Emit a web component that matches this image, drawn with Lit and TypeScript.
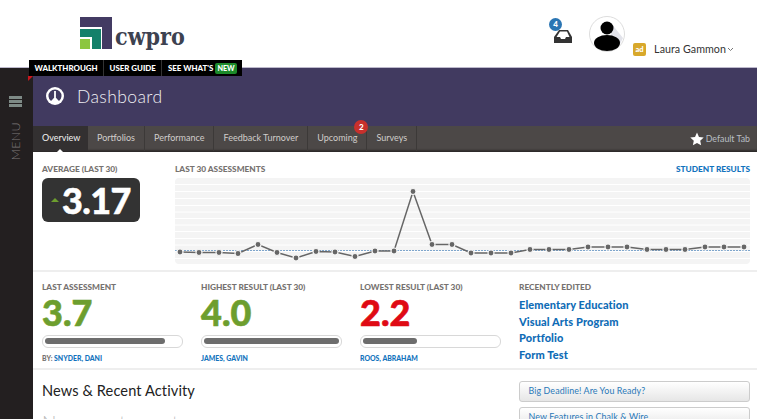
import { LitElement, html, css, svg } from "lit";
import { customElement } from "lit/decorators.js";

const PTS: [number, number][] = [
  [5, 74], [24, 74.5], [44, 74.5], [63, 75.5], [83, 66.5], [102, 74.5], [121, 80], [141, 73.5], [160, 74], [180, 78.5],
  [200, 73], [219, 73], [238, 13.5], [257, 66.5], [277, 66.5], [296, 75], [316, 75], [336, 75], [355, 71.5], [374, 71.5],
  [394, 71.5], [413, 69], [433, 69], [452, 69], [472, 71.5], [491, 71.5], [510, 71.5], [530, 69], [549, 69], [569, 69],
];
const GRID = [6.5, 13.5, 20.5, 27.5, 34, 40.5, 47, 53.5, 60.5, 67, 73.5, 80.5];

const TABS = ["Portfolios", "Performance", "Feedback Turnover", "Upcoming", "Surveys"];
const STATS = [
  { label: "LAST ASSESSMENT", value: "3.7", tone: "good", fill: 89, by: "BY: ", name: "SNYDER, DANI" },
  { label: "HIGHEST RESULT (LAST 30)", value: "4.0", tone: "good", fill: 100, by: "", name: "JAMES, GAVIN" },
  { label: "LOWEST RESULT (LAST 30)", value: "2.2", tone: "bad", fill: 40, by: "", name: "ROOS, ABRAHAM" },
];
const RECENT = ["Elementary Education", "Visual Arts Program", "Portfolio", "Form Test"];

@customElement("app-root")
export class AppRoot extends LitElement {
  static styles = css`
    :host { display: block; width: 757px; height: 419px; overflow: hidden; position: relative; background: #fff;
      font-family: Lato, "Open Sans", sans-serif; color: #222; }
    .top { height: 68px; display: flex; box-sizing: border-box; border-bottom: 1px solid #bdb9cc; background: #fff; }
    .logo { margin: 17px 0 0 80px; display: flex; align-items: flex-end; height: 32px; gap: 3px; }
    .logo-text { font-family: "DejaVu Serif", serif; font-weight: 700; font-size: 25px; line-height: 25px; color: #3d4250; transform: scaleX(0.83); transform-origin: left; }
    .right { margin-left: auto; display: flex; align-items: flex-start; padding-right: 23px; }
    .inbox { position: relative; margin: 27px 17px 0 0; width: 18px; height: 13px; }
    .count { position: absolute; left: -5px; top: -9px; width: 13px; height: 13px; border-radius: 50%; background: #2a75b3; color: #fff; font-size: 8px; font-weight: 900; text-align: center; line-height: 13px; }
    .avatar { width: 36px; height: 36px; margin: 16px 8px 0 0; display: block; }
    .role { width: 13px; height: 13px; margin: 43px 8px 0 0; background: #d8a82b; border-radius: 2px; color: #fff; font-size: 7.5px; font-weight: 900; text-align: center; line-height: 13px; }
    .user { margin-top: 42px; font-size: 10.7px; line-height: 14px; color: #333; display: flex; align-items: center; gap: 1px; letter-spacing: 0.05px; }
    .helpbar { position: absolute; left: 29px; top: 60px; height: 16px; background: #000; display: flex; color: #fff; font-size: 7.9px; font-weight: 900; line-height: 16px; z-index: 3; }
    .helpbar span.item { padding: 0 5.5px; border-right: 1px solid #333; white-space: nowrap; }
    .helpbar span.item:last-child { border-right: 0; padding-right: 5.5px; }
    .new { background: #1c8a2a; border-radius: 2px; padding: 1px 2px; margin-left: 2px; font-size: 7.2px; }
    .body { display: flex; height: 351px; }
    .side { width: 33px; flex: none; background: #231f20; position: relative; display: flex; flex-direction: column; align-items: center; padding: 28px 2px 0 0; box-sizing: border-box; }
    .side::after { content: ""; position: absolute; right: 0; top: 8px; border-style: solid; border-width: 5px 5px 0 0; border-color: #c8161d transparent transparent transparent; }
    .ham { width: 13px; height: 11px; background: repeating-linear-gradient(#7e8a86 0 3px, transparent 3px 4px); }
    .menu { writing-mode: vertical-rl; transform: rotate(180deg); color: #7d7979; font-size: 12.5px; letter-spacing: 0.3px; margin-top: 15px; font-weight: 300; }
    .main { flex: 1; min-width: 0; }
    .title { height: 58px; background: #413a60; display: flex; align-items: center; gap: 13px; padding-left: 13px; color: #f0f0f5; font-size: 17.5px; font-weight: 300; letter-spacing: 0.4px; padding-bottom: 2px; box-sizing: border-box; }
    .title svg { display: block; margin-bottom: 1px; }
    .tabs { height: 26px; background: #4c4847; display: flex; font-size: 9px; line-height: 24px; color: #d0cdcb; border-bottom: 1px solid #2d2a2a; box-sizing: border-box; box-shadow: inset 0 -2px 2px -1px #2f2c2c; }
    .tab { padding: 0 9px; border-right: 1px solid #3c3938; position: relative; white-space: nowrap; }
    .tab.on { background: #333031; color: #f2f2f2; width: 55px; padding: 0 0 0 9px; box-sizing: border-box; border-right: 0; }
    .tab.on::after { content: ""; position: absolute; left: 24px; bottom: -1px; border-style: solid; border-width: 0 3.5px 3.5px; border-color: transparent transparent #fff; }
    .pip { position: absolute; right: -2px; top: -6px; width: 14px; height: 14px; border-radius: 50%; background: #c8302c; color: #fff; font-size: 8px; font-weight: 900; line-height: 14px; text-align: center; }
    .dflt { margin-left: auto; display: flex; align-items: center; gap: 2px; padding-right: 7px; color: #b9bfc4; font-size: 8.8px; padding-top: 1px; }
    .perf { height: 120px; display: flex; padding: 12px 7px 0 9px; box-sizing: border-box; border-bottom: 2px solid #eee; }
    .lbl { font-size: 8.3px; font-weight: 900; color: #767270; line-height: 11px; white-space: nowrap; }
    .avg { width: 133px; flex: none; }
    .avgbox { margin-top: 3px; width: 98px; height: 44px; background: #333; border-radius: 6px; display: flex; align-items: center; color: #fff; font-size: 36px; font-weight: 900; line-height: 44px; box-sizing: border-box; padding-left: 9px; gap: 3px; letter-spacing: -0.6px; -webkit-text-stroke: 0.5px #fff; }
    .up { width: 0; height: 0; border-style: solid; border-width: 0 4px 4px; border-color: transparent transparent #6d9e2e; }
    .chartcol { flex: 1; min-width: 0; }
    .charthead { display: flex; justify-content: space-between; }
    .link { color: #1273bd; }
    .chart { display: block; margin-top: 3px; }
    .stats { height: 98px; display: flex; padding: 10px 7px 0 9px; box-sizing: border-box; border-bottom: 2px solid #eee; }
    .stat { width: 159px; flex: none; }
    .num { font-size: 36px; font-weight: 900; line-height: 36px; margin-top: 1px; -webkit-text-stroke: 0.6px currentColor; }
    .good { color: #6d9e2e; }
    .bad { color: #df0a14; }
    .track { margin-top: 5px; width: 141px; height: 13px; box-sizing: border-box; border: 1.5px solid #d8d8d8; border-radius: 6px; padding: 2px; background: #fff; }
    .bar { height: 6px; background: #6d6d6d; border-radius: 3px; }
    .by { font-size: 6.9px; font-weight: 900; color: #767270; margin-top: 5px; line-height: 10px; }
    .by b { color: #1273bd; font-weight: 900; }
    .recent a { display: block; color: #0f6cb6; font-size: 11px; font-weight: 900; line-height: 16.7px; letter-spacing: 0.1px; }
    .recent .lbl { margin-bottom: 4px; }
    .bottom { display: flex; padding: 0 7px 0 9px; }
    .news { width: 477px; flex: none; }
    .news h2 { margin: 11px 0 0; font-size: 14.6px; line-height: 20px; font-weight: 400; color: #222; letter-spacing: 0.1px; }
    .news p { margin: 9px 0 0; font-size: 19px; line-height: 26px; font-weight: 300; color: #bbb; letter-spacing: 0.3px; white-space: nowrap; }
    .btns { flex: 1; padding-top: 11px; display: flex; flex-direction: column; gap: 5px; }
    .btn { height: 21px; box-sizing: border-box; border: 1px solid #ccc; border-radius: 3px; background: linear-gradient(#fff, #e6e6e6); color: #2a78b8; font-size: 8.9px; line-height: 18px; padding-left: 8.5px; letter-spacing: 0.1px; white-space: nowrap; }
  `;

  render() {
    return html`
      <div class="top">
        <div class="logo">
          <svg width="32" height="32" viewBox="0 0 32 32">
            <rect width="32" height="32" fill="#433b63"/>
            <rect y="10" width="22" height="22" fill="#fff"/>
            <rect y="12" width="21" height="20" fill="#14806a"/>
            <rect y="20" width="12" height="12" fill="#fff"/>
            <rect y="22" width="10" height="10" fill="#8cc63f"/>
          </svg>
          <span class="logo-text">cwpro</span>
        </div>
        <div class="right">
          <div class="inbox">
            <svg width="18" height="13" viewBox="0 0 18 13">
              <path d="M0 7 L5 0 H14 L18 7 V13 H0Z" fill="#333"/>
              <path d="M2.5 7 L6 1.5 H13 L15.5 7 H12 L11 9 H7 L6 7Z" fill="#fff"/>
            </svg>
            <span class="count">4</span>
          </div>
          <svg class="avatar" viewBox="0 0 36 36">
            <circle cx="18" cy="18" r="17.5" fill="#fff" stroke="#ddd"/>
            <path d="M22 7 L34 22 L30 30 L22 22Z" fill="#e2e3ea"/>
            <circle cx="18" cy="12" r="6.5" fill="#000"/>
            <ellipse cx="18" cy="27" rx="13" ry="8" fill="#000"/>
          </svg>
          <span class="role">ad</span>
          <span class="user">Laura Gammon
            <svg width="7" height="5" viewBox="0 0 7 5"><path d="M1 1 L3.5 3.5 L6 1" fill="none" stroke="#777" stroke-width="1"/></svg>
          </span>
        </div>
      </div>
      <div class="helpbar">
        <span class="item">WALKTHROUGH</span><span class="item">USER GUIDE</span><span class="item">SEE WHAT'S<span class="new">NEW</span></span>
      </div>
      <div class="body">
        <div class="side">
          <div class="ham"></div>
          <div class="menu">MENU</div>
        </div>
        <div class="main">
          <div class="title">
            <svg width="18" height="18" viewBox="0 0 18 18">
              <circle cx="9" cy="9" r="9" fill="#fff"/>
              <path d="M5 14 A6.5 6.5 0 1 1 13 14 L11 12 H7Z" fill="#413a60"/>
              <rect x="8.1" y="4" width="1.8" height="8" fill="#fff"/>
              <circle cx="9" cy="13" r="2.2" fill="#fff"/>
            </svg>
            <span>Dashboard</span>
          </div>
          <div class="tabs">
            <div class="tab on">Overview</div>
            ${TABS.map((t) => html`<div class="tab">${t}${t === "Upcoming" ? html`<span class="pip">2</span>` : ""}</div>`)}
            <div class="dflt">
              <svg width="14" height="14" viewBox="0 0 24 24"><path d="M12 1 L15.4 8.4 L23.5 9.3 L17.5 14.8 L19.1 22.8 L12 18.8 L4.9 22.8 L6.5 14.8 L0.5 9.3 L8.6 8.4Z" fill="#fff"/></svg>
              <span>Default Tab</span>
            </div>
          </div>
          <div class="perf">
            <div class="avg">
              <div class="lbl">AVERAGE (LAST 30)</div>
              <div class="avgbox"><span class="up"></span><span>3.17</span></div>
            </div>
            <div class="chartcol">
              <div class="charthead">
                <span class="lbl">LAST 30 ASSESSMENTS</span>
                <span class="lbl link">STUDENT RESULTS</span>
              </div>
              <svg class="chart" width="575" height="86" viewBox="0 0 575 86">
                <rect width="575" height="86" rx="4" fill="#f4f4f4"/>
                ${GRID.map((y) => svg`<line x1="0" x2="575" y1=${y} y2=${y} stroke="#fff" stroke-width="1"/>`)}
                <line x1="0" x2="575" y1="72.5" y2="72.5" stroke="#7fa6cc" stroke-width="1" stroke-dasharray="2 1"/>
                <polyline points=${PTS.map((p) => p.join(",")).join(" ")} fill="none" stroke="#666" stroke-width="1.5"/>
                ${PTS.map(([x, y]) => svg`<circle cx=${x} cy=${y} r="3" fill="#666" stroke="#f4f4f4" stroke-width="1.2"/>`)}
              </svg>
            </div>
          </div>
          <div class="stats">
            ${STATS.map((s) => html`
              <div class="stat">
                <div class="lbl">${s.label}</div>
                <div class="num ${s.tone}">${s.value}</div>
                <div class="track"><div class="bar" style="width:${s.fill}%"></div></div>
                <div class="by">${s.by}<b>${s.name}</b></div>
              </div>`)}
            <div class="recent">
              <div class="lbl">RECENTLY EDITED</div>
              ${RECENT.map((r) => html`<a>${r}</a>`)}
            </div>
          </div>
          <div class="bottom">
            <div class="news">
              <h2>News &amp; Recent Activity</h2>
              <p>No recent events</p>
            </div>
            <div class="btns">
              <div class="btn">Big Deadline! Are You Ready?</div>
              <div class="btn">New Features in Chalk &amp; Wire</div>
            </div>
          </div>
        </div>
      </div>
    `;
  }
}
